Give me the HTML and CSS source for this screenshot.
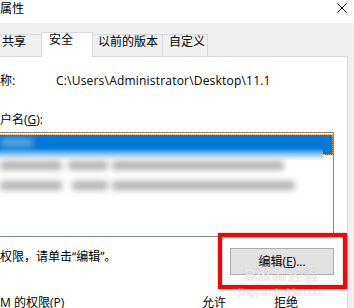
FILE: index.html
```html
<!DOCTYPE html>
<html lang="zh-CN">
<head>
<meta charset="utf-8">
<title>属性</title>
<link rel="stylesheet" href="styles.css">
</head>
<body>
<div class="window">
  <header class="titlebar">
    <span class="title">属性</span>
    <svg class="close" width="10" height="10" viewBox="0 0 10 10" aria-label="关闭"><path d="M0.5 0.5L9.5 9.5M9.5 0.5L0.5 9.5" stroke="#000" stroke-width="1" fill="none"/></svg>
  </header>
  <nav class="tabs">
    <div class="tab tab-share">共享</div>
    <div class="tab tab-active">安全</div>
    <div class="tab tab-prev">以前的版本</div>
    <div class="tab tab-custom">自定义</div>
  </nav>
  <section class="panel">
    <div class="name-row"><span class="name-label">称:</span><span class="path">C:\Users\Administrator\Desktop\11.1</span></div>
    <div class="group-label">户名(<u>G</u>):</div>
    <div class="listbox">
      <div class="row-selected">
        <div class="sel-main"><span class="blob blob-light"></span></div>
        <div class="sel-end"></div>
      </div>
      <div class="row">
        <span class="blob b-a"></span><span class="blob b-b"></span><span class="blob b-c"></span>
      </div>
      <div class="row">
        <span class="blob b-a"></span><span class="blob b-d"></span><span class="blob b-e"></span>
      </div>
    </div>
    <div class="edit-row">
      <span class="hint">权限，请单击“编辑”。</span>
      <button class="edit-btn">编辑(<u>E</u>)...</button>
    </div>
    <div class="perm-head">
      <span class="perm-label">M 的权限(P)</span>
      <span class="allow">允许</span>
      <span class="deny">拒绝</span>
    </div>
  </section>
  <div class="annot"></div>
  <div class="watermark">
    <div class="wm-logo"><span class="wm-bai">Bai</span><span class="wm-paw">du</span><span class="wm-jy">经验</span></div>
    <div class="wm-url">jingyan.baidu.com</div>
  </div>
</div>
</body>
</html>
```
FILE: styles.css
```css
* { box-sizing: border-box; }
html, body { margin: 0; padding: 0; }
body {
  width: 354px;
  height: 308px;
  overflow: hidden;
  background: #f0f0f0;
  font-family: "Open Sans", "Noto Sans CJK SC", sans-serif;
  font-size: 12px;
  line-height: 16px;
  color: #000;
}
.window { position: relative; width: 354px; height: 308px; overflow: hidden; }

.titlebar {
  height: 23px;
  background: #fff;
  display: flex;
  justify-content: space-between;
  align-items: flex-start;
  padding-right: 7px;
}
.title { line-height: 17px; }
.close { margin-top: 3px; }

.tabs {
  display: flex;
  align-items: flex-end;
  height: 33px;
}
.tab {
  height: 22px;
  line-height: 14px;
  border: 1px solid #d9d9d9;
  border-bottom: none;
  background: #f0f0f0;
  margin-left: -1px;
  white-space: nowrap;
}
.tab-share { margin-left: -10px; width: 52px; padding-left: 11px; }
.tab-active {
  position: relative;
  z-index: 1;
  width: 52px;
  height: 25px;
  margin-bottom: -1px;
  background: #fff;
  padding-left: 7px;
}
.tab-prev { padding: 0 4px 0 5px; }
.tab-custom { padding: 0 2px 0 6px; }

.panel {
  margin-left: -10px;
  width: 358px;
  height: 260px;
  background: #fff;
  border: 1px solid #d9d9d9;
  border-bottom: none;
  padding: 16px 13px 0 9px;
}
.name-row { display: flex; height: 16px; white-space: nowrap; }
.name-label { width: 56px; }
.path { letter-spacing: 0.2px; }
.group-label { margin-top: 23px; }

.listbox {
  margin-top: 4px;
  margin-left: -4px;
  height: 105px;
  border: 1px solid #828790;
  background: #fff;
  padding-top: 1px;
}
.row-selected {
  display: flex;
  height: 21px;
  border-top: 1px dotted #ef9a32;
}
.sel-main {
  flex: 1;
  height: 26px;
  padding: 3px 0 0 3px;
  background: linear-gradient(#0078d7 0 13px, rgba(0,120,215,0.55) 18px, rgba(0,120,215,0.15) 23px, rgba(0,120,215,0) 26px);
}
.sel-end {
  width: 10px;
  height: 20px;
  background: #0078d7;
  border-right: 1px dotted #ef9a32;
  border-bottom: 1px dotted #ef9a32;
}
.row {
  display: flex;
  align-items: center;
  height: 20px;
  padding-left: 3px;
}
.blob {
  display: block;
  height: 9px;
  border-radius: 3px;
  background: #b0b0b0;
  filter: blur(3px);
}
.blob-light { width: 33px; height: 9px; background: rgba(255,255,255,0.35); }
.b-a { width: 62px; }
.b-b { width: 40px; margin-left: 6px; }
.b-c { width: 172px; margin-left: 4px; }
.b-d { width: 36px; margin-left: 10px; }
.b-e { width: 183px; margin-left: 4px; }

.edit-row {
  display: flex;
  justify-content: space-between;
  align-items: flex-start;
  margin-top: 11px;
}
.hint { margin-top: 1px; }
.edit-btn {
  width: 104px;
  height: 27px;
  padding: 0;
  background: #e1e1e1;
  border: 1px solid #adadad;
  font: inherit;
  line-height: 16px;
  color: #000;
}
.perm-head { display: flex; margin-top: 20px; white-space: nowrap; }
.perm-label { width: 202px; }
.allow { width: 72px; }

.annot {
  position: absolute;
  left: 218px;
  top: 233px;
  width: 129px;
  height: 56px;
  border: 4px solid #f00;
  box-shadow: 0 0 2px rgba(0,0,0,0.35), inset 0 0 2px rgba(0,0,0,0.35);
}
.watermark {
  position: absolute;
  left: 236px;
  top: 265px;
  width: 90px;
  text-align: center;
  pointer-events: none;
}
.wm-logo {
  display: flex;
  justify-content: center;
  align-items: baseline;
  color: rgba(255,255,255,0.8);
  text-shadow: 0 0 1px rgba(0,0,0,0.3);
  font-family: "Liberation Sans", sans-serif;
  font-weight: bold;
  font-size: 17px;
  line-height: 20px;
}
.wm-paw { font-size: 11px; margin: 0 2px; }
.wm-jy { font-family: "Noto Sans CJK SC", sans-serif; font-size: 15px; font-weight: normal; }
.wm-url {
  font-family: "Liberation Sans", sans-serif;
  font-size: 10px;
  line-height: 12px;
  letter-spacing: 0.3px;
  color: rgba(255,255,255,0.9);
  text-shadow: 0 0 1px rgba(0,0,0,0.3);
}
```
